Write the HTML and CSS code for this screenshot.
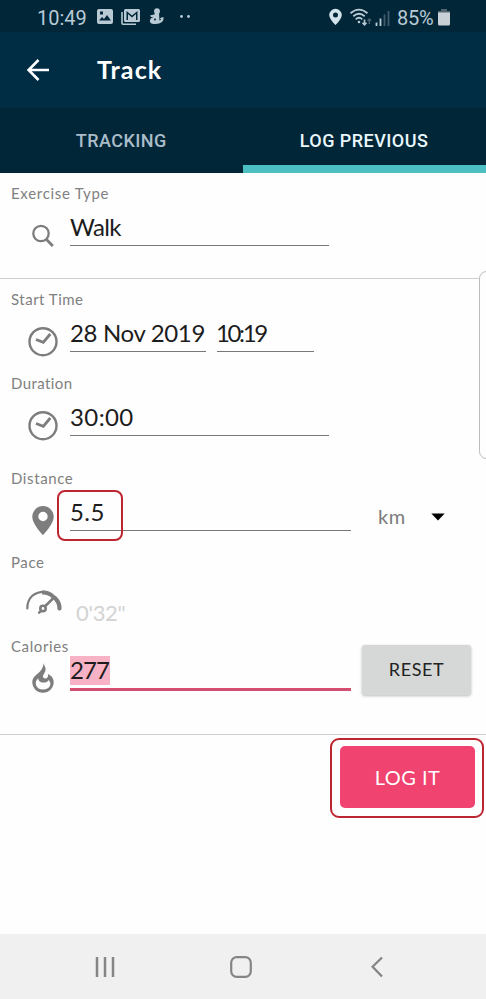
FILE: index.html
```html
<!DOCTYPE html>
<html lang="en">
<head>
<meta charset="utf-8">
<title>Track</title>
<link rel="stylesheet" href="styles.css">
</head>
<body>
<div class="screen">
  <div class="status">
    <span class="time">10:49</span>
    <svg class="notifications" width="96" height="20" viewBox="0 0 96 20" fill="#b9cad5">
      <path fill-rule="evenodd" d="M2 3h12q2 0 2 2v11q0 2-2 2H2q-2 0-2-2V5q0-2 2-2zM2 14.500h12l-4-5.500-3 4-2-2zM3 5.500v3h3v-3z"/>
      <path d="M24.200 6h1.600v11.500H39V19H26q-1.800 0-1.800-1.800z"/>
      <path fill-rule="evenodd" d="M28.500 3h13q1.500 0 1.500 1.500v10q0 1.500-1.500 1.500h-13q-1.500 0-1.500-1.500v-10Q27 3 28.500 3zM29.500 5v9H31V8l4 3.500L39 8v6h1.500V5L35 9.500z"/>
      <circle cx="60" cy="5.200" r="2.900"/>
      <path d="M58 7h4l.5 7.500 1.500-.5-1-2 3.500-1q.5 3-1.500 5-3 2.500-8 2-5-.3-4-4 .6-2 3-2.800zM53 9.500l4-1v2.500h-3z"/>
      <circle cx="58" cy="13.500" r="1" fill="#002638"/>
      <circle cx="84.500" cy="10.500" r="1.400"/><circle cx="91.500" cy="10.500" r="1.400"/>
    </svg>
    <svg class="signals" width="62" height="20" viewBox="0 0 62 20" fill="none" stroke="#b9cad5">
      <path fill="#d3e3ec" stroke="none" fill-rule="evenodd" d="M6.500 1.800a6.300 6.300 0 0 1 6.300 6.300c0 3.900-6.300 10.100-6.300 10.100S.2 12 .2 8.100a6.300 6.300 0 0 1 6.300-6.300zm0 3.800a2.500 2.500 0 1 0 0 5 2.500 2.500 0 0 0 0-5z"/>
      <path stroke-width="1.800" d="M21.500 6.300q8.500-7.300 17 0M24.300 9.300q5.700-5 11.400 0M26.700 12.300q3.300-3 6.600 0"/>
      <circle cx="30" cy="15" r="1.300" fill="#b9cad5" stroke="none"/>
      <path stroke-width="1.600" d="M35.500 12.500v5M33.500 15.800l2 2 2-2"/>
      <path stroke="#49616e" stroke-width="1.400" d="M40.300 17v-5M38.500 13.800l1.800-1.800 1.800 1.800"/>
      <path stroke-width="1.800" d="M47.500 15.500V19M51.500 11.500V19"/>
      <path stroke="#405b69" stroke-width="1.800" d="M55.500 7.500V19M59.500 4V19"/>
    </svg>
    <span class="percent">85%</span>
    <svg class="battery" width="12" height="17" viewBox="0 0 12 17"><path fill="#52656e" d="M3 0h6v2h3v2H0V2h3z"/><path fill="#c8d2d6" d="M0 3.500h12V15q0 1.500-1.500 1.500h-9Q0 16.500 0 15z"/></svg>
  </div>

  <header class="appbar">
    <svg width="24" height="24" viewBox="0 0 24 24" fill="none" stroke="#fff" stroke-width="2.600"><path d="M12.500 2L2.600 12l9.900 10M3 12h20"/></svg>
    <h1>Track</h1>
  </header>

  <nav class="tabs">
    <div class="tab">TRACKING</div>
    <div class="tab active">LOG PREVIOUS</div>
  </nav>

  <main>
    <section class="group">
      <div class="field">
        <div class="label l-exercise">Exercise Type</div>
        <div class="row">
          <svg class="icon" viewBox="0 0 30 30" fill="none" stroke="#7d7d7d"><circle cx="13" cy="12.500" r="7.700" stroke-width="2.300"/><path stroke-width="2.800" d="M18.500 18.500l6.300 6.500"/></svg>
          <div class="input wide"><span class="v-walk">Walk</span></div>
        </div>
      </div>
    </section>

    <section class="group details">
      <div class="field">
        <div class="label l-start">Start Time</div>
        <div class="row">
          <svg class="icon" viewBox="0 0 30 30" fill="none" stroke="#7d7d7d"><circle cx="15" cy="14.700" r="13.500" stroke-width="2.400"/><path stroke-width="2.800" d="M8 12.500l7.300 2.800 7-8.300"/></svg>
          <div class="input date"><span class="v-date">28 Nov 2019</span></div>
          <div class="input clock"><span class="v-clock">10:19</span></div>
        </div>
      </div>
      <div class="field">
        <div class="label l-duration">Duration</div>
        <div class="row">
          <svg class="icon" viewBox="0 0 30 30" fill="none" stroke="#7d7d7d"><circle cx="15" cy="14.700" r="13.500" stroke-width="2.400"/><path stroke-width="2.800" d="M8 12.500l7.300 2.800 7-8.300"/></svg>
          <div class="input wide"><span class="v-duration">30:00</span></div>
        </div>
      </div>
      <div class="field distance">
        <div class="label l-distance">Distance</div>
        <div class="row">
          <svg class="icon" viewBox="0 0 30 30" fill="#7d7d7d"><path fill-rule="evenodd" d="M15 0a10.700 10.700 0 0 1 10.700 10.700C25.700 18 15 29 15 29S4.300 18 4.300 10.700A10.700 10.700 0 0 1 15 0zm0 5.800a4.700 4.700 0 1 0 0 9.400 4.700 4.700 0 0 0 0-9.400z"/></svg>
          <div class="input full"><span class="v-distance">5.5</span></div>
          <div class="unit"><span>km</span><svg width="14" height="8" viewBox="0 0 14 8"><path d="M.3.500h13.400L7 7.500z"/></svg></div>
          <div class="mark mark-distance"></div>
        </div>
      </div>
      <div class="field pace">
        <div class="label l-pace">Pace</div>
        <div class="row">
          <svg class="gauge" width="38" height="28" viewBox="0 0 38 28" fill="none" stroke="#7d7d7d" stroke-linecap="round"><path stroke-width="2.200" d="M2.300 19.500C2.300 8.500 9.500 2.800 19 2.800"/><path stroke-width="4" stroke-linecap="butt" d="M17 3.500q6.800-.5 11.300 4.300"/><path stroke-width="4.200" d="M29.700 8.800q5 4.600 4.800 10.700"/><path stroke-width="2.500" d="M28 9.500l-8.200 8M15.600 22.300l-1.500 1.400"/><circle cx="18" cy="19.500" r="2.700" stroke-width="2.600"/></svg>
          <span class="pace-value">0'32"</span>
        </div>
      </div>
      <div class="field calories">
        <div class="label l-calories">Calories</div>
        <div class="row">
          <svg class="icon flame" viewBox="0 0 30 30"><path fill="#7d7d7d" fill-rule="evenodd" d="M15.500 0c1 3.500 2.800 4.700 1.800 8-.8 2.700-2.300 3.300-2.300 5.600 0 2.200 3.300 2.800 4.600.6.600-1 .5-2.100.3-3.200 3.600 1.500 5.800 4.700 5.800 8.300 0 5.800-4.700 10.500-10.700 10.500S4.300 25.100 4.300 19.300c0-6.200 5.200-7.300 8.500-11.800C14.600 5 15.600 2.800 15.500 0zM10.200 15.200c-4.900 4.300-2.100 11.300 4.800 11.300 6.900 0 9.500-6 5.600-9.500-1.700 3.800-10.200 3.700-10.400-1.800z"/></svg>
          <div class="input full focused"><span class="selected v-calories">277</span></div>
          <button class="reset"><span>RESET</span></button>
        </div>
      </div>
    </section>

    <div class="actions">
      <div class="log-frame"><button class="log"><span>LOG IT</span></button></div>
    </div>
    <div class="edge-handle"></div>
  </main>

  <footer class="navbar">
    <svg width="20" height="22" viewBox="0 0 20 22" fill="none" stroke="#858585" stroke-width="2.500"><path d="M2 1v20M10 1v20M18 1v20"/></svg>
    <svg width="22" height="22" viewBox="0 0 22 22" fill="none" stroke="#858585" stroke-width="2.200"><rect x="1.200" y="1.200" width="19.600" height="19.600" rx="5.500"/></svg>
    <svg width="12" height="22" viewBox="0 0 12 22" fill="none" stroke="#858585" stroke-width="2.300"><path d="M11 1.500L1.600 10.700 11 20.500"/></svg>
  </footer>
</div>
</body>
</html>
```
FILE: styles.css
```css
* { box-sizing: border-box; }

body {
  margin: 0;
  background: #fefefe;
  color: #1c1c1c;
  font-family: Lato, "Open Sans", sans-serif;
}

svg { display: block; flex: none; }

.screen {
  width: 486px;
  height: 999px;
  display: flex;
  flex-direction: column;
  overflow: hidden;
}

.status {
  height: 32px;
  flex: none;
  display: flex;
  align-items: center;
  padding: 3px 36px 0 37px;
  background: #002638;
  color: #b9cad5;
  font: 20px/30px Roboto, sans-serif;
}
.time { width: 60px; }
.percent { width: 41px; margin-left: 6px; letter-spacing: -0.2px; }
.notifications { margin-bottom: 3px; }
.signals { margin-left: auto; margin-bottom: 2px; }

.appbar {
  height: 76px;
  flex: none;
  display: flex;
  align-items: center;
  gap: 47px;
  padding-left: 26px;
  background: #002d44;
  color: #fff;
}
.appbar h1 { margin: -2px 0 0; font-size: 25px; line-height: 30px; font-weight: 700; letter-spacing: 1.1px; }

.tabs {
  height: 65px;
  flex: none;
  display: grid;
  grid-template-columns: 242.500px 243px;
  background: #002638;
  font: 500 18px/66px Roboto, sans-serif;
  letter-spacing: 0.45px;
  color: #aabdc9;
  text-align: center;
}
.tab { height: 65px; }
.active { color: #eaf7fb; box-shadow: inset 0 -8px #4bbfc1; }

main { position: relative; flex: 1; }

.group { padding-top: 10px; border-bottom: 1px solid #cfcfcf; }
.group:first-child { height: 106px; }
.details { height: 456px; }

.field { height: 84px; }
.distance { margin-top: 11px; }
.pace { height: 85px; }

.label {
  height: 20px;
  padding-left: 11px;
  font-size: 15px;
  line-height: 20px;
  letter-spacing: 0.6px;
  color: #808080;
  white-space: nowrap;
}
.l-exercise { letter-spacing: 0.7px; }
.l-start { letter-spacing: 0.5px; }
.l-duration { letter-spacing: 0.4px; }
.l-calories { line-height: 19px; }

.row { position: relative; display: flex; align-items: flex-start; padding-left: 28px; }
.icon { width: 30px; height: 30px; margin: 18px 12px 0 0; }

.input {
  height: 43px;
  flex: none;
  border-bottom: 1.500px solid #777;
  font-size: 24px;
  line-height: 47px;
  white-space: nowrap;
}
.wide { width: 259px; }
.full { width: 281px; }
.date { width: 136px; }
.clock { width: 97px; margin-left: 11px; }

.v-walk { letter-spacing: -0.6px; }
.v-date { letter-spacing: -0.35px; }
.v-clock { margin-left: -1px; letter-spacing: -2.400px; }
.v-duration { letter-spacing: 0.4px; }
.v-distance { letter-spacing: 0.4px; }
.v-calories { letter-spacing: -0.9px; }

.unit {
  display: flex;
  align-items: center;
  gap: 25px;
  height: 30px;
  margin: 14px 0 0 27px;
  color: #7b7b7b;
  font-size: 20px;
}
.unit span { width: 28px; margin-top: -3px; letter-spacing: 0.5px; }

.mark {
  position: absolute;
  border: 2px solid #bd2531;
  border-radius: 8px;
}
.mark-distance { left: 57px; top: 2px; width: 66px; height: 51px; }

.gauge { margin: 17px 0 0 -3px; }
.pace-value { margin: 26px 0 0 13px; font-size: 22px; line-height: 29px; letter-spacing: -0.3px; color: #d3d3d3; }

.focused { height: 34px; border-bottom: 3px solid #d44e72; }
.selected { display: block; width: 40px; height: 29px; line-height: 27px; background: #f7b2c5; }
.focused .selected { margin-top: -1px; }
.flame { margin-top: 6px; }

button { border: 0; padding: 0; font-family: inherit; white-space: nowrap; }
.reset {
  width: 109px;
  height: 50px;
  margin: -12px 0 0 11px;
  padding-bottom: 3px;
  border-radius: 3px;
  background: #d6d8d7;
  box-shadow: 0 1px 3px #0004;
  color: #222;
  font-size: 18px;
  letter-spacing: 0.6px;
}

.actions { display: flex; justify-content: flex-end; padding: 3px 2px 0 0; }
.log-frame {
  width: 154px;
  height: 80px;
  display: grid;
  place-items: center;
  border: 2px solid #bd2531;
  border-radius: 9px;
}
.log {
  width: 135px;
  height: 62px;
  margin-bottom: 3px;
  padding-left: 1px;
  border-radius: 5px;
  background: #f04370;
  color: #fff;
  font-size: 20px;
  letter-spacing: 0.5px;
}

.edge-handle {
  position: absolute;
  top: 98px;
  right: -8px;
  width: 15px;
  height: 188px;
  border: 1px solid #bcbcbc;
  border-radius: 8px;
  background: #fefefe;
}

.navbar {
  height: 65px;
  flex: none;
  display: flex;
  align-items: center;
  padding-left: 95px;
  background: #f0f0f0;
}
.navbar svg:nth-child(2) { margin-left: 115px; }
.navbar svg:nth-child(3) { margin-left: 119px; }
```
